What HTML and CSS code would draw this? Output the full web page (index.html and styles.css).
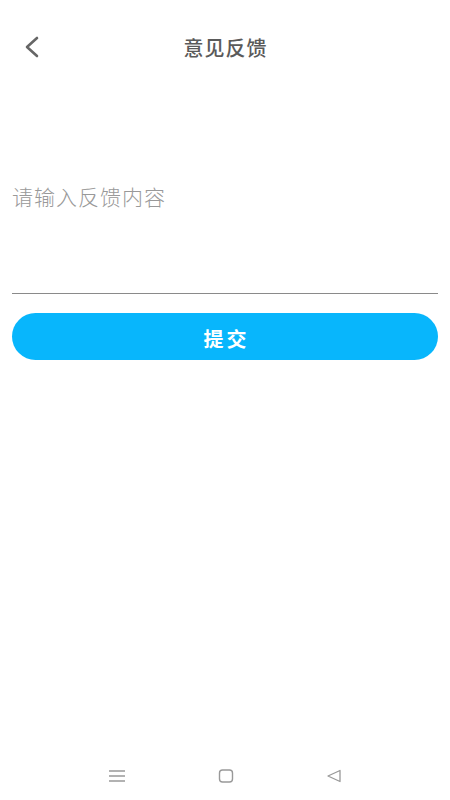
FILE: index.html
```html
<!DOCTYPE html>
<html lang="zh">
<head>
<meta charset="utf-8">
<link rel="stylesheet" href="styles.css">
</head>
<body>
<div class="app">
  <header class="topbar">
    <span class="back">
      <svg width="18" height="22" viewBox="0 0 18 22"><path d="M14 2 L4 11 L14 20" fill="none" stroke="#666" stroke-width="2.6" stroke-linecap="round" stroke-linejoin="round"/></svg>
    </span>
    <h1 class="title">意见反馈</h1>
  </header>
  <main class="content">
    <div class="field">
      <div class="placeholder">请输入反馈内容</div>
    </div>
    <button class="submit">提交</button>
  </main>
  <nav class="navbar">
    <svg width="18" height="14" viewBox="0 0 18 14"><path d="M1 2H17M1 7H17M1 12H17" stroke="#999" stroke-width="1.3"/></svg>
    <svg width="16" height="14" viewBox="0 0 16 14"><rect x="1.5" y="1" width="13" height="12" rx="3" fill="none" stroke="#999" stroke-width="1.4"/></svg>
    <svg width="16" height="14" viewBox="0 0 16 14"><path d="M14 1.5 L2 7 L14 12.5 Z" fill="none" stroke="#999" stroke-width="1.3" stroke-linejoin="round"/></svg>
  </nav>
</div>
</body>
</html>
```

FILE: styles.css
```css
* { box-sizing: border-box; }
html, body { margin: 0; padding: 0; background: #fff; }
body { font-family: "Noto Sans CJK SC", "Noto Sans", sans-serif; }
.app { width: 450px; height: 800px; display: flex; flex-direction: column; }
.topbar { height: 96px; position: relative; display: flex; align-items: flex-start; justify-content: center; padding-top: 34px; }
.back { position: absolute; left: 23px; top: 36px; width: 18px; height: 22px; }
.back svg { display: block; }
.title { margin: 0; font-size: 20px; font-weight: 500; color: #5a5a5a; line-height: 28px; letter-spacing: 1px; margin-right: -1px; }
.content { flex: 1; padding: 0 12px; }
.field { height: 198px; border-bottom: 1.5px solid #8a8a8a; padding-top: 86px; }
.placeholder { font-size: 21px; font-weight: 300; color: #999; line-height: 28px; letter-spacing: 1px; }
.submit { display: block; width: 100%; height: 47px; margin-top: 19px; border: none; border-radius: 24px; background: #08b6fc; color: #fff; font-family: inherit; font-size: 20px; font-weight: 700; letter-spacing: 3px; text-indent: 3px; padding: 3px 0 0; }
.navbar { height: 48px; display: flex; justify-content: space-between; align-items: center; padding: 0 108px; }
.navbar svg { display: block; }
```
